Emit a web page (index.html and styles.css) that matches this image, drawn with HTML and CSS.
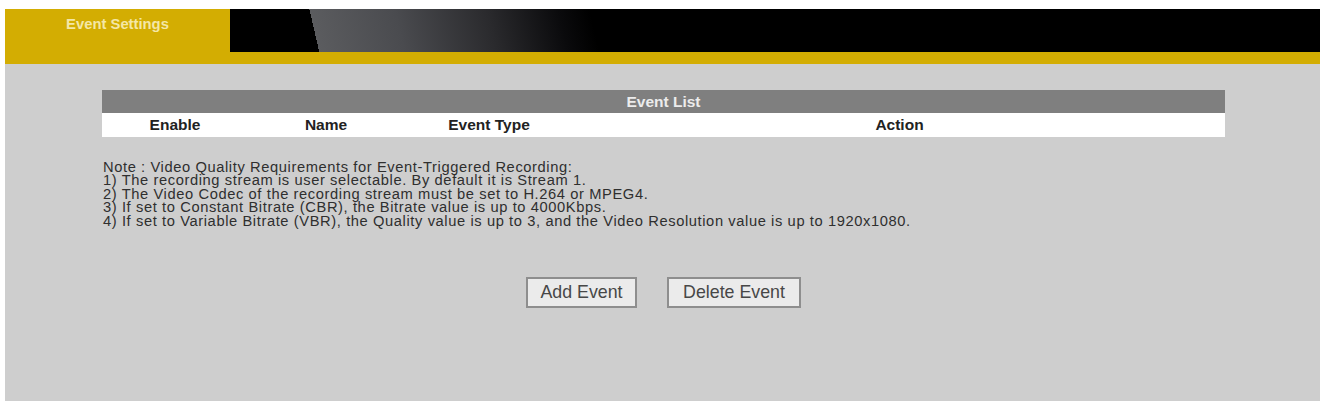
FILE: index.html
```html
<!DOCTYPE html>
<html>
<head>
<meta charset="utf-8">
<title>Event Settings</title>
<link rel="stylesheet" href="styles.css">
</head>
<body>
<div class="page">
  <div class="header">
    <div class="tab">Event Settings</div>
    <div class="banner"></div>
  </div>
  <div class="content">
    <table class="event-list">
      <colgroup>
        <col class="c-enable">
        <col class="c-name">
        <col class="c-type">
        <col class="c-action">
      </colgroup>
      <thead>
        <tr class="title-row"><th colspan="4">Event List</th></tr>
        <tr class="head-row">
          <th>Enable</th>
          <th>Name</th>
          <th>Event Type</th>
          <th>Action</th>
        </tr>
      </thead>
    </table>
    <div class="note">
      <div>Note : Video Quality Requirements for Event-Triggered Recording:</div>
      <div>1) The recording stream is user selectable. By default it is Stream 1.</div>
      <div>2) The Video Codec of the recording stream must be set to H.264 or MPEG4.</div>
      <div>3) If set to Constant Bitrate (CBR), the Bitrate value is up to 4000Kbps.</div>
      <div>4) If set to Variable Bitrate (VBR), the Quality value is up to 3, and the Video Resolution value is up to 1920x1080.</div>
    </div>
    <div class="actions">
      <button class="btn btn-add">Add Event</button>
      <button class="btn btn-delete">Delete Event</button>
    </div>
  </div>
</div>
</body>
</html>
```

FILE: styles.css
```css
html, body {
  margin: 0;
  padding: 0;
  background: #ffffff;
  font-family: "Liberation Sans", Arial, sans-serif;
}

.page {
  margin: 9px 6px 0 5px;
}

.header {
  display: flex;
  align-items: flex-start;
  height: 55px;
  background: #d3ad02;
}

.tab {
  width: 225px;
  height: 43px;
  box-sizing: border-box;
  padding-top: 7px;
  text-align: center;
  font-weight: bold;
  font-size: 14.8px;
  color: #f4e7a6;
}

.banner {
  flex: 1;
  height: 43px;
  background: linear-gradient(77deg, #000000 0, #000000 87px, #5b5c5f 87px, #4a4b4f 170px, #2a2a2d 260px, #0a0a0c 330px, #000000 360px, #000000 100%);
}

.content {
  box-sizing: border-box;
  background: #cecece;
  height: 337px;
  padding: 26px 95px 0 97px;
}

.event-list {
  width: 100%;
  border-collapse: collapse;
  table-layout: fixed;
}

.c-enable { width: 146px; }
.c-name { width: 156px; }
.c-type { width: 170px; }

.title-row th {
  background: #7f7f7f;
  color: #ececec;
  font-size: 15.5px;
  font-weight: bold;
  height: 23px;
  padding: 0;
  text-align: center;
}

.head-row th {
  background: #ffffff;
  color: #222222;
  font-size: 15.5px;
  font-weight: bold;
  height: 24px;
  padding: 0;
  text-align: center;
}

.note {
  margin-top: 24px;
  margin-left: 1px;
  font-size: 14.7px;
  line-height: 13.4px;
  letter-spacing: 0.6px;
  color: #2f2f2f;
}

.actions {
  display: flex;
  justify-content: center;
  gap: 30px;
  margin-top: 49px;
}

.btn {
  height: 31px;
  box-sizing: border-box;
  padding: 0;
  background: #ebebeb;
  border: 2px solid #8e8e8e;
  border-radius: 0;
  font-family: "Liberation Sans", Arial, sans-serif;
  font-size: 17.8px;
  color: #474747;
}

.btn-add { width: 111px; }
.btn-delete { width: 134px; }
```
